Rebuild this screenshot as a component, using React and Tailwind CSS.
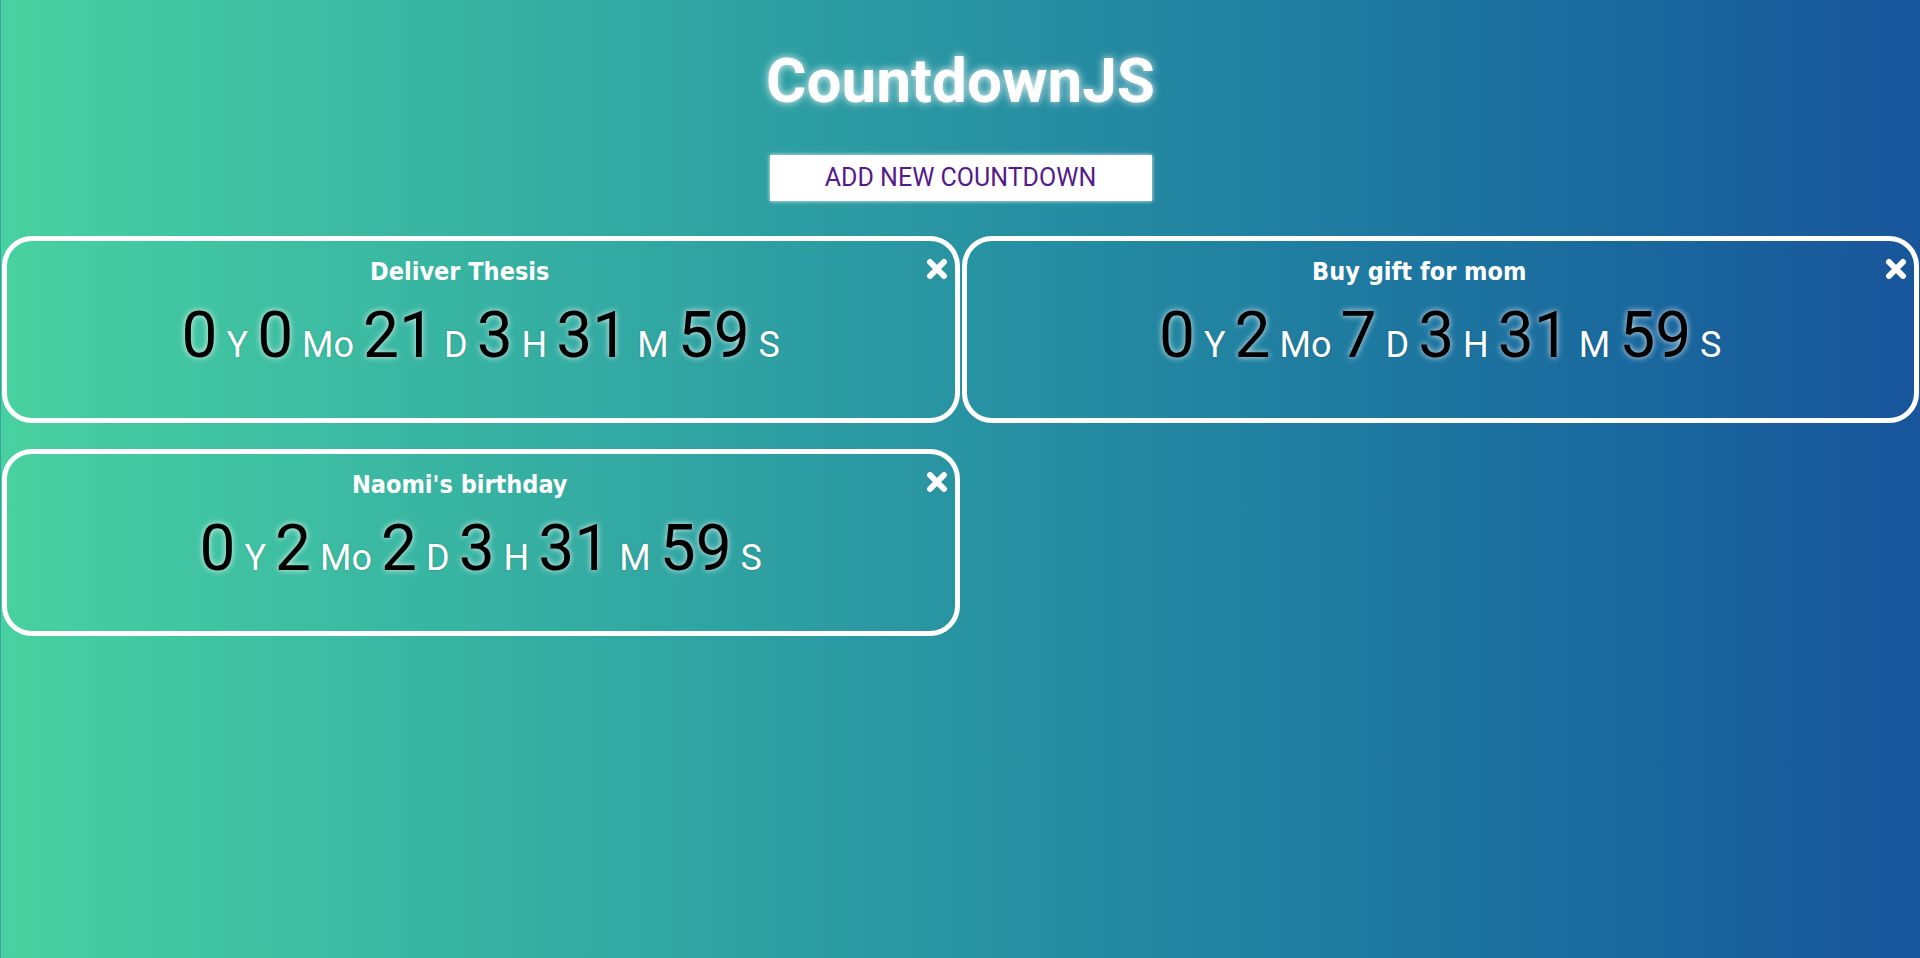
import React from "react";

const countdowns = [
  { title: "Deliver Thesis", v: ["0", "0", "21", "3", "31", "59"] },
  { title: "Buy gift for mom", v: ["0", "2", "7", "3", "31", "59"] },
  { title: "Naomi's birthday", v: ["0", "2", "2", "3", "31", "59"] },
];
const labels = ["Y", "Mo", "D", "H", "M", "S"];

function CloseIcon() {
  return (
    <svg width="22" height="22" viewBox="0 0 22 22" className="block">
      <path d="M4 4 L18 18 M18 4 L4 18" stroke="white" strokeWidth="6" strokeLinecap="round" fill="none" />
    </svg>
  );
}

function Card({ title, v }) {
  return (
    <div className="relative mx-[1px] h-[187px] rounded-[30px] border-[5px] border-white pt-[17px]">
      <div className="absolute right-[7px] top-[17px]">
        <CloseIcon />
      </div>
      <div className="pr-[42px] text-center text-[25px] leading-[28px] font-bold text-white font-stretch-condensed [font-family:'DejaVu_Sans_Condensed','DejaVu_Sans',sans-serif]">
        {title}
      </div>
      <div className="mt-[12px] flex h-[75px] items-baseline justify-center gap-[9px] [font-family:Roboto,sans-serif]">
        {v.map((n, i) => (
          <React.Fragment key={i}>
            <span className="text-[64px] leading-[75px] font-normal text-black [text-shadow:0_0_6px_rgba(255,255,255,0.85)]">
              {n}
            </span>
            <span className="text-[36px] leading-none font-normal text-white [text-shadow:0_0_2px_rgba(0,0,0,0.25)]">
              {labels[i]}
            </span>
          </React.Fragment>
        ))}
      </div>
    </div>
  );
}

export default function App() {
  return (
    <div className="min-h-[958px] w-full border-l border-[#36a39c] bg-gradient-to-r from-[#48d1a0] to-[#18559b] [font-family:Roboto,sans-serif]">
      <h1 className="pt-[43px] text-center text-[62px] leading-[75px] font-bold text-white [text-shadow:0_0_8px_rgba(255,255,255,0.9)]">
        CountdownJS
      </h1>
      <div className="mt-[37px] flex justify-center">
        <button className="h-[46px] w-[382px] bg-white text-[25px] font-normal text-[#551a8b] shadow-[0_0_4px_rgba(255,255,255,0.9)] [font-family:Roboto,sans-serif]">
          ADD NEW COUNTDOWN
        </button>
      </div>
      <div className="mt-[35px] grid grid-cols-2 gap-y-[26px]">
        {countdowns.map((c, i) => (
          <Card key={i} {...c} />
        ))}
      </div>
    </div>
  );
}
